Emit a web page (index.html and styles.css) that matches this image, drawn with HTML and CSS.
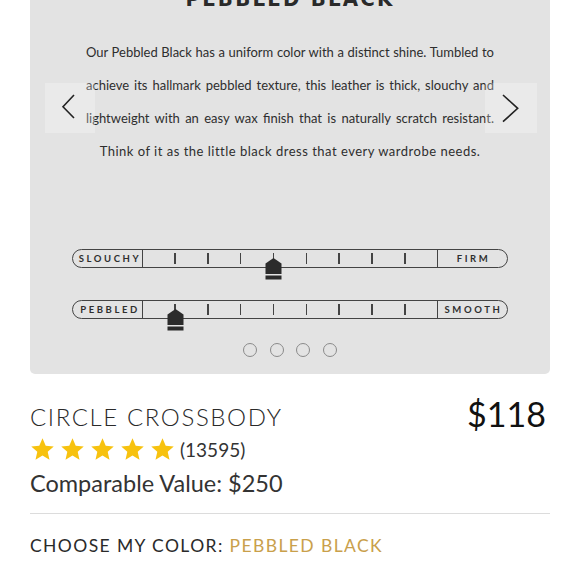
FILE: index.html
```html
<!DOCTYPE html>
<html>
<head>
<meta charset="utf-8">
<link rel="stylesheet" href="styles.css">
</head>
<body>
<div class="panel">
  <h2 class="title">PEBBLED BLACK</h2>
  <div class="desc">
    <span class="jline">Our Pebbled Black has a uniform color with a distinct shine. Tumbled to</span>
    <span class="jline">achieve its hallmark pebbled texture, this leather is thick, slouchy and</span>
    <span class="jline">lightweight with an easy wax finish that is naturally scratch resistant.</span>
    <span class="cline">Think of it as the little black dress that every wardrobe needs.</span>
  </div>
  <button class="nav nav-left" aria-label="Previous">
    <svg width="50" height="50" viewBox="0 0 50 50"><path d="M29 12 L18 23.7 L29 35" fill="none" stroke="#222" stroke-width="1.6"/></svg>
  </button>
  <button class="nav nav-right" aria-label="Next">
    <svg width="52" height="50" viewBox="0 0 52 50"><path d="M18 12 L32.7 25.3 L18 38.7" fill="none" stroke="#222" stroke-width="1.6"/></svg>
  </button>
  <div class="sliders">
    <div class="scale">
      <span class="lbl lbl-left">SLOUCHY</span>
      <div class="track">
        <i class="tick"></i><i class="tick"></i><i class="tick"></i><i class="tick"></i><i class="tick"></i><i class="tick"></i><i class="tick"></i><i class="tick"></i>
        <svg class="marker" style="left: 44.44%" width="17" height="22" viewBox="0 0 17 22"><path d="M8.5 0 L16.5 5.5 V16 H0.5 V5.5 Z" fill="#2b2b2b"/><rect x="0.5" y="17.5" width="16" height="4" fill="#2b2b2b"/></svg>
      </div>
      <span class="lbl lbl-right">FIRM</span>
    </div>
    <div class="scale">
      <span class="lbl lbl-left">PEBBLED</span>
      <div class="track">
        <i class="tick"></i><i class="tick"></i><i class="tick"></i><i class="tick"></i><i class="tick"></i><i class="tick"></i><i class="tick"></i><i class="tick"></i>
        <svg class="marker" style="left: 11.11%" width="17" height="22" viewBox="0 0 17 22"><path d="M8.5 0 L16.5 5.5 V16 H0.5 V5.5 Z" fill="#2b2b2b"/><rect x="0.5" y="17.5" width="16" height="4" fill="#2b2b2b"/></svg>
      </div>
      <span class="lbl lbl-right">SMOOTH</span>
    </div>
  </div>
  <div class="dots">
    <span class="dot"></span><span class="dot"></span><span class="dot"></span><span class="dot"></span>
  </div>
</div>

<div class="info">
  <div class="info-top">
    <div class="info-left">
      <h1 class="name">CIRCLE CROSSBODY</h1>
      <div class="rating">
        <div class="stars">
          <svg viewBox="0 0 24 24" width="25" height="25"><path d="M12 1.2 L15.1 8.3 L22.8 9 L17 14.2 L18.7 21.8 L12 17.8 L5.3 21.8 L7 14.2 L1.2 9 L8.9 8.3 Z" fill="#f7c20f"/></svg>
          <svg viewBox="0 0 24 24" width="25" height="25"><path d="M12 1.2 L15.1 8.3 L22.8 9 L17 14.2 L18.7 21.8 L12 17.8 L5.3 21.8 L7 14.2 L1.2 9 L8.9 8.3 Z" fill="#f7c20f"/></svg>
          <svg viewBox="0 0 24 24" width="25" height="25"><path d="M12 1.2 L15.1 8.3 L22.8 9 L17 14.2 L18.7 21.8 L12 17.8 L5.3 21.8 L7 14.2 L1.2 9 L8.9 8.3 Z" fill="#f7c20f"/></svg>
          <svg viewBox="0 0 24 24" width="25" height="25"><path d="M12 1.2 L15.1 8.3 L22.8 9 L17 14.2 L18.7 21.8 L12 17.8 L5.3 21.8 L7 14.2 L1.2 9 L8.9 8.3 Z" fill="#f7c20f"/></svg>
          <svg viewBox="0 0 24 24" width="25" height="25"><path d="M12 1.2 L15.1 8.3 L22.8 9 L17 14.2 L18.7 21.8 L12 17.8 L5.3 21.8 L7 14.2 L1.2 9 L8.9 8.3 Z" fill="#f7c20f"/></svg>
        </div>
        <span class="count">(13595)</span>
      </div>
      <div class="comp">Comparable Value: $250</div>
    </div>
    <div class="price">$118</div>
  </div>
  <hr class="divider">
  <div class="color">CHOOSE MY COLOR: <span class="color-name">PEBBLED BLACK</span></div>
</div>
</body>
</html>
```

FILE: styles.css
```css
* { box-sizing: border-box; }
html, body { margin: 0; padding: 0; background: #fff; }
body { font-family: "Lato", "Liberation Sans", sans-serif; color: #333; overflow: hidden; height: 580px; }

.panel {
  position: relative;
  margin: 0 30px;
  height: 374px;
  background: #e3e3e3;
  border-radius: 0 0 5px 5px;
  display: flex;
  flex-direction: column;
  align-items: center;
}

.title {
  margin: -12px 0 0;
  height: 22px;
  font-family: "DejaVu Sans Condensed", "DejaVu Sans", sans-serif;
  font-weight: bold;
  font-size: 22px;
  line-height: 22px;
  letter-spacing: 2.2px;
  color: #2a2a2a;
  text-align: center;
}

.desc {
  margin-top: 26px;
  width: 408px;
  font-size: 13px;
  line-height: 33px;
  color: #2e2e2e;
}
.jline { display: block; text-align: justify; text-align-last: justify; white-space: nowrap; word-spacing: -3px; }
.cline { display: block; text-align: center; letter-spacing: 0.5px; }

.nav {
  position: absolute;
  top: 83px;
  width: 50px;
  height: 50px;
  padding: 0;
  border: 0;
  background: rgba(255, 255, 255, 0.25);
  display: flex;
}
.nav-left { left: 15px; }
.nav-right { right: 13px; width: 52px; }

.sliders {
  margin-top: 81px;
  width: 436px;
  display: flex;
  flex-direction: column;
  gap: 32px;
}
.scale {
  height: 19px;
  display: flex;
  border: 1.5px solid #444;
  border-radius: 10px;
}
.lbl {
  width: 70px;
  display: flex;
  align-items: center;
  justify-content: center;
  font-size: 9.5px;
  font-weight: bold;
  letter-spacing: 2.6px;
  color: #2f2f2f;
}
.lbl-left { padding-left: 5px; border-right: 1.5px solid #444; }
.lbl-right { padding-left: 2px; border-left: 1.5px solid #444; }
.track {
  position: relative;
  flex: 1;
  display: flex;
  justify-content: space-evenly;
  align-items: center;
}
.tick { display: block; width: 1.5px; height: 11px; background: #444; }
.marker {
  position: absolute;
  top: 7.5px;
  margin-left: -8.5px;
}

.dots {
  margin-top: 24px;
  display: flex;
  gap: 12.5px;
}
.dot {
  width: 14px;
  height: 14px;
  border: 1.5px solid #8a8a8a;
  border-radius: 50%;
}

.info { padding: 0 34px 0 30px; }
.info-top { display: flex; justify-content: space-between; align-items: flex-start; }
.name {
  margin: 28px 0 0;
  font-weight: 300;
  font-size: 24px;
  line-height: 30px;
  letter-spacing: 1.6px;
  color: #2a2a2a;
}
.rating { display: flex; align-items: center; margin-top: 5px; gap: 5px; }
.stars { display: flex; gap: 5px; }
.count { font-size: 19px; color: #333; }
.comp { margin-top: 6px; font-size: 23.5px; line-height: 30px; color: #333; }
.price { margin-top: 20px; font-size: 34px; line-height: 40px; color: #111; }

.divider {
  margin: 15px 0 0;
  width: 520px;
  border: 0;
  border-top: 1.5px solid #dcdcdc;
}
.color {
  margin-top: 21px;
  font-size: 17.5px;
  line-height: 22px;
  letter-spacing: 1.4px;
  color: #2a2a2a;
}
.color-name { color: #c9a04b; }
```
